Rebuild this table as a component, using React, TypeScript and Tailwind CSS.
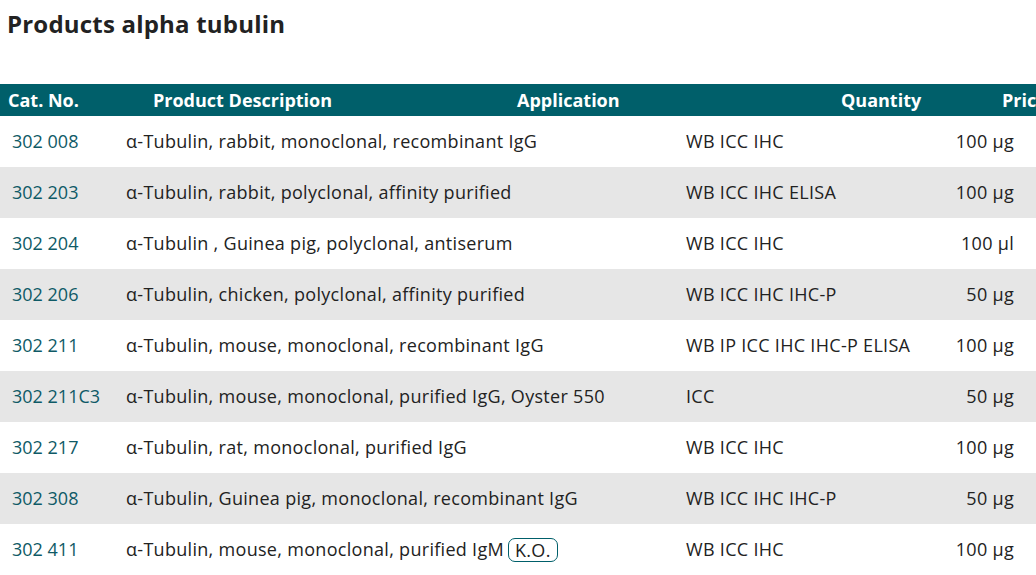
const rows = [
  { cat: "302 008", desc: "α-Tubulin, rabbit, monoclonal, recombinant IgG", app: "WB ICC IHC", qty: "100 µg" },
  { cat: "302 203", desc: "α-Tubulin, rabbit, polyclonal, affinity purified", app: "WB ICC IHC ELISA", qty: "100 µg" },
  { cat: "302 204", desc: "α-Tubulin , Guinea pig, polyclonal, antiserum", app: "WB ICC IHC", qty: "100 µl" },
  { cat: "302 206", desc: "α-Tubulin, chicken, polyclonal, affinity purified", app: "WB ICC IHC IHC-P", qty: "50 µg" },
  { cat: "302 211", desc: "α-Tubulin, mouse, monoclonal, recombinant IgG", app: "WB IP ICC IHC IHC-P ELISA", qty: "100 µg" },
  { cat: "302 211C3", desc: "α-Tubulin, mouse, monoclonal, purified IgG, Oyster 550", app: "ICC", qty: "50 µg" },
  { cat: "302 217", desc: "α-Tubulin, rat, monoclonal, purified IgG", app: "WB ICC IHC", qty: "100 µg" },
  { cat: "302 308", desc: "α-Tubulin, Guinea pig, monoclonal, recombinant IgG", app: "WB ICC IHC IHC-P", qty: "50 µg" },
  { cat: "302 411", desc: "α-Tubulin, mouse, monoclonal, purified IgM", app: "WB ICC IHC", qty: "100 µg", ko: true },
];

export default function App() {
  return (
    <div
      className="h-[575px] w-[1036px] overflow-hidden bg-white text-[#222]"
      style={{ fontFamily: '"Open Sans", "Noto Sans", sans-serif' }}
    >
      <h1 className="pl-[7px] pt-[8px] text-[24px] font-bold leading-[32px] tracking-[0.2px] text-[#222]">
        Products alpha tubulin
      </h1>

      <div className="mt-[44px] w-[1100px]">
        <div className="flex h-[32px] items-center whitespace-nowrap bg-[#005f6a] text-[18px] font-bold text-white">
          <div className="w-[153px] shrink-0 pl-[8px]">Cat. No.</div>
          <div className="w-[364px] shrink-0">Product Description</div>
          <div className="w-[324px] shrink-0">Application</div>
          <div className="w-[161px] shrink-0">Quantity</div>
          <div>Price</div>
        </div>

        {rows.map((r, i) => (
          <div
            key={r.cat}
            className={`flex h-[51px] items-center whitespace-nowrap text-[18px] tracking-[0.3px] ${i % 2 === 1 ? "bg-[#e6e6e6]" : "bg-white"}`}
          >
            <div className="w-[126px] shrink-0 pl-[12px] tracking-normal text-[#0f5a66]">{r.cat}</div>
            <div className="flex w-[560px] shrink-0 items-center">
              {r.desc}
              {r.ko && (
                <span className="ml-[4px] rounded-[7px] border border-[#005f6a] px-[6px] leading-[22px]">
                  K.O.
                </span>
              )}
            </div>
            <div className="w-[220px] shrink-0">{r.app}</div>
            <div className="w-[108px] shrink-0 text-right">{r.qty}</div>
          </div>
        ))}
      </div>
    </div>
  );
}
